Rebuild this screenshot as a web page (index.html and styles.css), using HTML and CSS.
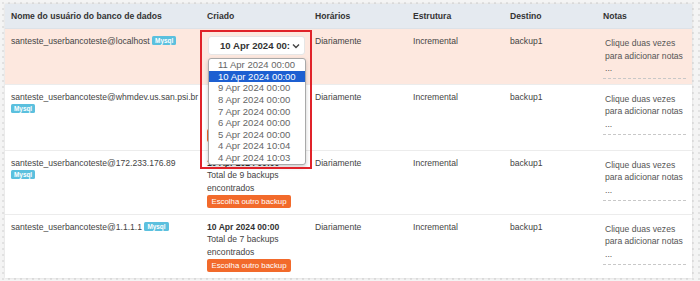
FILE: index.html
```html
<!DOCTYPE html>
<html lang="pt-BR">
<head>
    <meta charset="UTF-8">
    <meta name="viewport" content="width=device-width, initial-scale=1.0">
    <title>Backups do banco de dados</title>
    <link rel="stylesheet" href="styles.css">
</head>
<body>
    <div class="page">
        <table class="backup-table">
            <colgroup>
                <col class="col-name">
                <col class="col-created">
                <col class="col-schedule">
                <col class="col-structure">
                <col class="col-target">
                <col class="col-notes">
            </colgroup>
            <thead>
                <tr>
                    <th>Nome do usuário do banco de dados</th>
                    <th>Criado</th>
                    <th>Horários</th>
                    <th>Estrutura</th>
                    <th>Destino</th>
                    <th>Notas</th>
                </tr>
            </thead>
            <tbody>
                <tr class="row-active">
                    <td><span class="db-user">santeste_userbancoteste@localhost</span> <span class="badge">Mysql</span></td>
                    <td>
                        <div class="picker">
                            <div class="date-select">
                                <span class="date-select-text">10 Apr 2024 00:</span>
                                <svg class="chevron" width="8" height="6" viewBox="0 0 8 6"><path d="M1 1.5 L4 4.5 L7 1.5" fill="none" stroke="#444" stroke-width="1.4"/></svg>
                            </div>
                            <ul class="date-options">
                                <li>11 Apr 2024 00:00</li>
                                <li class="selected">10 Apr 2024 00:00</li>
                                <li>9 Apr 2024 00:00</li>
                                <li>8 Apr 2024 00:00</li>
                                <li>7 Apr 2024 00:00</li>
                                <li>6 Apr 2024 00:00</li>
                                <li>5 Apr 2024 00:00</li>
                                <li>4 Apr 2024 10:04</li>
                                <li>4 Apr 2024 10:03</li>
                            </ul>
                            <div class="highlight"></div>
                        </div>
                    </td>
                    <td>Diariamente</td>
                    <td>Incremental</td>
                    <td>backup1</td>
                    <td><div class="notes">Clique duas vezes para adicionar notas<br>...</div></td>
                </tr>
                <tr class="row-tall">
                    <td><span class="db-user">santeste_userbancoteste@whmdev.us.san.psi.br</span> <span class="badge">Mysql</span></td>
                    <td>
                        <div class="covered">
                            <strong>10 Apr 2024 00:00</strong><br>
                            Total de 9 backups encontrados<br>
                        </div>
                        <span class="btn-other">Escolha outro backup</span>
                    </td>
                    <td>Diariamente</td>
                    <td>Incremental</td>
                    <td>backup1</td>
                    <td><div class="notes">Clique duas vezes para adicionar notas<br>...</div></td>
                </tr>
                <tr>
                    <td><span class="db-user">santeste_userbancoteste@172.233.176.89</span> <span class="badge">Mysql</span></td>
                    <td>
                        <strong>10 Apr 2024 00:00</strong><br>
                        Total de 9 backups encontrados<br>
                        <span class="btn-other">Escolha outro backup</span>
                    </td>
                    <td>Diariamente</td>
                    <td>Incremental</td>
                    <td>backup1</td>
                    <td><div class="notes">Clique duas vezes para adicionar notas<br>...</div></td>
                </tr>
                <tr>
                    <td><span class="db-user">santeste_userbancoteste@1.1.1.1</span> <span class="badge">Mysql</span></td>
                    <td>
                        <strong>10 Apr 2024 00:00</strong><br>
                        Total de 7 backups encontrados<br>
                        <span class="btn-other">Escolha outro backup</span>
                    </td>
                    <td>Diariamente</td>
                    <td>Incremental</td>
                    <td>backup1</td>
                    <td><div class="notes">Clique duas vezes para adicionar notas<br>...</div></td>
                </tr>
            </tbody>
        </table>
    </div>
</body>
</html>
```

FILE: styles.css
```css
body {
    margin: 0;
    font-family: "Liberation Sans", Arial, sans-serif;
    font-size: 8.6px;
    line-height: 12.3px;
    color: #444;
    background-color: #f4f4f4;
    background-image: radial-gradient(#e2e2e2 0.8px, transparent 1px);
    background-size: 6px 6px;
}
.page {
    padding: 4px 8px 2px 5px;
}
.backup-table {
    width: 100%;
    table-layout: fixed;
    border-collapse: collapse;
    background-color: #fff;
    box-shadow: 0 0 2px rgba(0, 0, 0, 0.12);
}
.col-name { width: 196px; }
.col-created { width: 108px; }
.col-schedule { width: 98px; }
.col-structure { width: 97px; }
.col-target { width: 93px; }
.col-notes { width: 95px; }
th {
    text-align: left;
    font-weight: bold;
    color: #333;
    background-color: #e5eaf0;
    padding: 6px 6px;
    border-bottom: 1px solid #dde2e8;
    white-space: nowrap;
}
td {
    vertical-align: top;
    padding: 6px 6px 5px;
    border-top: 1px solid #ececec;
}
.row-active td {
    background-color: #fde8df;
    border-top: none;
}
.row-tall td {
    padding-bottom: 7px;
}
td strong {
    color: #333;
}
.db-user {
    white-space: nowrap;
}
.badge {
    display: inline-block;
    padding: 0 3px;
    font-size: 6.4px;
    line-height: 9px;
    font-weight: bold;
    color: #fff;
    background-color: #5bc0de;
    border-radius: 1.5px;
    vertical-align: 1px;
}
.btn-other {
    display: inline-block;
    margin: 1px 0;
    padding: 0 4.5px;
    font-size: 7.8px;
    line-height: 13px;
    color: #fff;
    background-color: #f26a2b;
    border-radius: 2px;
}
.notes {
    margin-top: 2px;
    padding: 0 2px 4px;
    color: #555;
    border-bottom: 1px dashed #c8c8c8;
}

/* open date dropdown */
.picker {
    position: relative;
    height: 22px;
}
.date-select {
    position: absolute;
    left: 1px;
    top: 1px;
    width: 97px;
    height: 19px;
    box-sizing: border-box;
    padding: 0 4px 0 11px;
    display: flex;
    align-items: center;
    white-space: nowrap;
    overflow: hidden;
    background-color: #fff;
    border: 1px solid #e6e6e6;
    border-radius: 3px;
    font-size: 9.6px;
    font-weight: bold;
    color: #333;
}
.chevron {
    flex: none;
    margin-left: auto;
}
.date-options {
    position: absolute;
    z-index: 2;
    left: 1px;
    top: 23px;
    width: 98px;
    margin: 0;
    padding: 0;
    list-style: none;
    background-color: #fff;
    border: 1px solid #a9a9a9;
    border-radius: 3px;
    box-shadow: 0 2px 4px rgba(0, 0, 0, 0.2);
    box-sizing: border-box;
}
.date-options li {
    height: 11.6px;
    line-height: 11.6px;
    padding-left: 9px;
    font-size: 9.5px;
    color: #666;
    white-space: nowrap;
}
.date-options li.selected {
    background-color: #1d5fd1;
    color: #fff;
}
.highlight {
    position: absolute;
    z-index: 3;
    left: -7px;
    top: -5px;
    width: 112px;
    height: 139px;
    box-sizing: border-box;
    border: 2px solid #e0232a;
}
/* row text that sits under the open list */
.covered {
    visibility: hidden;
}
```
